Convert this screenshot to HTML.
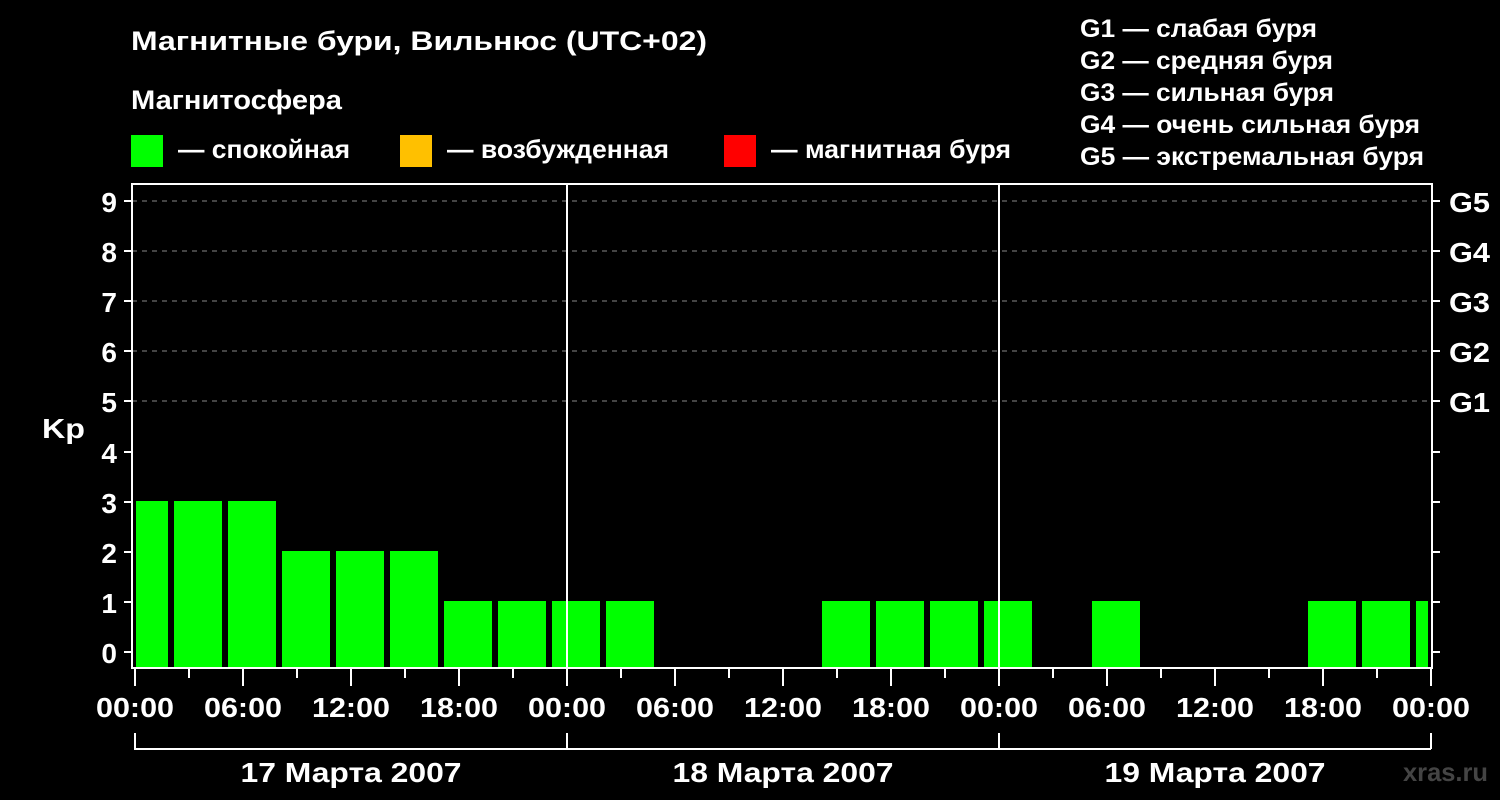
<!DOCTYPE html>
<html><head><meta charset="utf-8"><style>
html,body{margin:0;padding:0;background:#000;width:1500px;height:800px;overflow:hidden}
svg{display:block}
text{font-family:"Liberation Sans",Arial,sans-serif;font-weight:bold;fill:#fff}
</style></head><body>
<svg width="1500" height="800" viewBox="0 0 1500 800">
<text x="131" y="50" font-size="27" textLength="576" lengthAdjust="spacingAndGlyphs">Магнитные бури, Вильнюс (UTC+02)</text>
<text x="131" y="109" font-size="27" textLength="211" lengthAdjust="spacingAndGlyphs">Магнитосфера</text>
<rect x="131" y="135" width="32" height="32" fill="#00ff00"/>
<text x="178" y="158" font-size="26" textLength="172" lengthAdjust="spacingAndGlyphs">— спокойная</text>
<rect x="400" y="135" width="32" height="32" fill="#ffc000"/>
<text x="447" y="158" font-size="26" textLength="222" lengthAdjust="spacingAndGlyphs">— возбужденная</text>
<rect x="724" y="135" width="32" height="32" fill="#ff0000"/>
<text x="771" y="158" font-size="26" textLength="240" lengthAdjust="spacingAndGlyphs">— магнитная буря</text>
<g font-size="25">
<text x="1080" y="37" textLength="237" lengthAdjust="spacingAndGlyphs">G1 — слабая буря</text>
<text x="1080" y="69" textLength="253" lengthAdjust="spacingAndGlyphs">G2 — средняя буря</text>
<text x="1080" y="101" textLength="254" lengthAdjust="spacingAndGlyphs">G3 — сильная буря</text>
<text x="1080" y="133" textLength="340" lengthAdjust="spacingAndGlyphs">G4 — очень сильная буря</text>
<text x="1080" y="165" textLength="344" lengthAdjust="spacingAndGlyphs">G5 — экстремальная буря</text>
</g>
<g stroke="#888" stroke-width="1" stroke-dasharray="5,5">
<line x1="132" y1="201" x2="1432" y2="201"/><line x1="132" y1="251" x2="1432" y2="251"/>
<line x1="132" y1="301" x2="1432" y2="301"/><line x1="132" y1="351" x2="1432" y2="351"/>
<line x1="132" y1="401" x2="1432" y2="401"/>
</g>
<g fill="#00ff00">
<rect x="136" y="501" width="32" height="166"/>
<rect x="174" y="501" width="48" height="166"/>
<rect x="228" y="501" width="48" height="166"/>
<rect x="282" y="551" width="48" height="116"/>
<rect x="336" y="551" width="48" height="116"/>
<rect x="390" y="551" width="48" height="116"/>
<rect x="444" y="601" width="48" height="66"/>
<rect x="498" y="601" width="48" height="66"/>
<rect x="552" y="601" width="48" height="66"/>
<rect x="606" y="601" width="48" height="66"/>
<rect x="822" y="601" width="48" height="66"/>
<rect x="876" y="601" width="48" height="66"/>
<rect x="930" y="601" width="48" height="66"/>
<rect x="984" y="601" width="48" height="66"/>
<rect x="1092" y="601" width="48" height="66"/>
<rect x="1308" y="601" width="48" height="66"/>
<rect x="1362" y="601" width="48" height="66"/>
<rect x="1416" y="601" width="12" height="66"/>
</g>
<g stroke="#fff" stroke-width="2" fill="none">
<rect x="132" y="184" width="1300" height="484"/>
<line x1="567" y1="184" x2="567" y2="668"/><line x1="999" y1="184" x2="999" y2="668"/>
<path d="M124 201h8M124 251h8M124 301h8M124 351h8M124 401h8M124 452h8M124 502h8M124 552h8M124 602h8M124 652h8"/>
<path d="M1432 201h8M1432 251h8M1432 301h8M1432 351h8M1432 401h8M1432 452h8M1432 502h8M1432 552h8M1432 602h8M1432 652h8"/>
<path d="M135 668v18M189 668v10M243 668v18M297 668v10M351 668v18M405 668v10M459 668v18M513 668v10M567 668v18M621 668v10M675 668v18M729 668v10M783 668v18M837 668v10M891 668v18M945 668v10M999 668v18M1053 668v10M1107 668v18M1161 668v10M1215 668v18M1269 668v10M1323 668v18M1377 668v10M1431 668v18"/>
<path d="M135 733v16h1296M567 733v16M999 733v16M1431 733v16"/>
</g>
<g font-size="28" text-anchor="end">
<text x="117" y="212">9</text><text x="117" y="262">8</text><text x="117" y="312">7</text>
<text x="117" y="362">6</text><text x="117" y="412">5</text><text x="117" y="463">4</text>
<text x="117" y="513">3</text><text x="117" y="563">2</text><text x="117" y="613">1</text>
<text x="117" y="663">0</text>
</g>
<text x="42" y="438" font-size="28" textLength="43" lengthAdjust="spacingAndGlyphs">Kp</text>
<g font-size="28">
<text x="1449" y="212" textLength="41" lengthAdjust="spacingAndGlyphs">G5</text><text x="1449" y="262" textLength="41" lengthAdjust="spacingAndGlyphs">G4</text><text x="1449" y="312" textLength="41" lengthAdjust="spacingAndGlyphs">G3</text>
<text x="1449" y="362" textLength="41" lengthAdjust="spacingAndGlyphs">G2</text><text x="1449" y="412" textLength="41" lengthAdjust="spacingAndGlyphs">G1</text>
</g>
<g font-size="28" text-anchor="middle">
<text x="135" y="717" textLength="78" lengthAdjust="spacingAndGlyphs">00:00</text><text x="243" y="717" textLength="78" lengthAdjust="spacingAndGlyphs">06:00</text><text x="351" y="717" textLength="78" lengthAdjust="spacingAndGlyphs">12:00</text>
<text x="459" y="717" textLength="78" lengthAdjust="spacingAndGlyphs">18:00</text><text x="567" y="717" textLength="78" lengthAdjust="spacingAndGlyphs">00:00</text><text x="675" y="717" textLength="78" lengthAdjust="spacingAndGlyphs">06:00</text>
<text x="783" y="717" textLength="78" lengthAdjust="spacingAndGlyphs">12:00</text><text x="891" y="717" textLength="78" lengthAdjust="spacingAndGlyphs">18:00</text><text x="999" y="717" textLength="78" lengthAdjust="spacingAndGlyphs">00:00</text>
<text x="1107" y="717" textLength="78" lengthAdjust="spacingAndGlyphs">06:00</text><text x="1215" y="717" textLength="78" lengthAdjust="spacingAndGlyphs">12:00</text><text x="1323" y="717" textLength="78" lengthAdjust="spacingAndGlyphs">18:00</text>
<text x="1431" y="717" textLength="78" lengthAdjust="spacingAndGlyphs">00:00</text>
<text x="351" y="782" textLength="221" lengthAdjust="spacingAndGlyphs">17 Марта 2007</text>
<text x="783" y="782" textLength="221" lengthAdjust="spacingAndGlyphs">18 Марта 2007</text>
<text x="1215" y="782" textLength="221" lengthAdjust="spacingAndGlyphs">19 Марта 2007</text>
</g>
<text x="1403" y="781" font-size="26" style="fill:#444" textLength="85" lengthAdjust="spacingAndGlyphs">xras.ru</text>
</svg>
</body></html>
